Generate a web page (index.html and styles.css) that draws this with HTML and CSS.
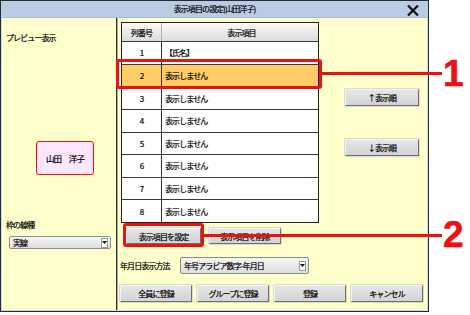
FILE: index.html
```html
<!DOCTYPE html>
<html lang="ja">
<head>
<meta charset="utf-8">
<link rel="stylesheet" href="styles.css">
</head>
<body>
<div class="window">
  <div class="titlebar">
    <span class="title">表示項目の設定(山田洋子)</span>
    <svg class="close" width="12" height="11" viewBox="0 0 12 11"><path d="M1 0.5 L11 10.5 M11 0.5 L1 10.5" stroke="#111" stroke-width="2.2"/></svg>
  </div>
  <div class="content">
    <div class="left">
      <div class="label preview-label">プレビュー表示</div>
      <div class="card">山田　洋子</div>
      <div class="label line-label">枠の線種</div>
      <div class="select small-select"><span>実線</span><span class="arrow"><svg width="5" height="3" viewBox="0 0 5 3"><path d="M0 0H5L2.5 3Z" fill="#111"/></svg></span></div>
    </div>
    <div class="main">
      <div class="top">
        <div class="table">
          <div class="row head"><div class="c1">列番号</div><div class="c2">表示項目</div></div>
          <div class="row"><div class="c1">1</div><div class="c2">【氏名】</div></div>
          <div class="row sel"><div class="c1">2</div><div class="c2">表示しません</div></div>
          <div class="row"><div class="c1">3</div><div class="c2">表示しません</div></div>
          <div class="row"><div class="c1">4</div><div class="c2">表示しません</div></div>
          <div class="row"><div class="c1">5</div><div class="c2">表示しません</div></div>
          <div class="row"><div class="c1">6</div><div class="c2">表示しません</div></div>
          <div class="row"><div class="c1">7</div><div class="c2">表示しません</div></div>
          <div class="row"><div class="c1">8</div><div class="c2">表示しません</div></div>
        </div>
        <div class="side">
          <div class="btn side-btn">↑表示順</div>
          <div class="btn side-btn down">↓表示順</div>
        </div>
      </div>
      <div class="actions">
        <div class="btn set-btn">表示項目を設定</div>
        <div class="btn del-btn">表示項目を削除</div>
      </div>
      <div class="date-row">
        <span class="label">年月日表示方法</span>
        <div class="select date-select"><span>年号アラビア数字-年月日</span><span class="arrow"><svg width="5" height="3" viewBox="0 0 5 3"><path d="M0 0H5L2.5 3Z" fill="#111"/></svg></span></div>
      </div>
      <div class="bottom">
        <div class="btn bb">全員に登録</div>
        <div class="btn bb">グループに登録</div>
        <div class="btn bb">登録</div>
        <div class="btn bb">キャンセル</div>
      </div>
    </div>
  </div>
</div>
<div class="anno box1"></div>
<div class="anno line1"></div>
<div class="anno num num1">1</div>
<div class="anno box2"></div>
<div class="anno line2"></div>
<div class="anno num num2">2</div>
</body>
</html>
```
FILE: styles.css
```css
* { box-sizing: border-box; }
body {
  margin: 0;
  background: #fff;
  width: 470px;
  height: 315px;
  position: relative;
  font-family: "Noto Sans CJK JP", "Noto Sans", sans-serif;
  font-size: 8px;
  letter-spacing: -0.9px;
  color: #000;
  -webkit-text-stroke: 0.2px #000;
  overflow: hidden;
}
.window {
  width: 429px;
  height: 312px;
  border: 1px solid #2a2a2a;
  display: flex;
  flex-direction: column;
  background: #c9dced;
}
.titlebar {
  height: 17px;
  background: #b8cde3;
  display: flex;
  align-items: center;
  justify-content: center;
  position: relative;
  border-bottom: 1px solid #a9bfd6;
}
.title { line-height: 1; }
.close { position: absolute; right: 9px; top: 4px; }
.content {
  flex: 1;
  display: flex;
  background: #ffffcc;
  margin: 0 1px 1px 1px;
}
.left {
  width: 115px;
  flex: 0 0 115px;
  border-right: 1px solid #333;
  box-shadow: 1px 0 0 #a8a8a0;
  display: flex;
  flex-direction: column;
  padding-left: 4px;
}
.label { line-height: 10px; white-space: nowrap; }
.preview-label { margin-top: 15px; }
.card {
  margin: 98px 0 0 30px;
  width: 58px;
  height: 34px;
  background: #ffe6ff;
  border: 1.5px solid #ee1010;
  border-radius: 3px;
  display: flex;
  align-items: center;
  justify-content: center;
  font-size: 8.5px;
}
.line-label { margin-top: 45px; }
.select {
  display: flex;
  align-items: center;
  justify-content: space-between;
  border: 1px solid #8d8d8d;
  border-radius: 2px;
  background: linear-gradient(#f6f6f6, #dedede);
  padding-left: 3px;
  padding-right: 2px;
  white-space: nowrap;
}
.arrow {
  width: 7px;
  height: 10px;
  background: #fff;
  border: 1px solid #9a9a9a;
  display: flex;
  align-items: center;
  justify-content: center;
  -webkit-text-stroke: 0;
}
.small-select {
  margin: 6px 0 0 3px;
  width: 102px;
  height: 13px;
}
.main {
  flex: 1;
  display: flex;
  flex-direction: column;
  padding-left: 1px;
}
.top { display: flex; }
.table {
  margin: 4px 0 0 3px;
  flex: 0 0 198px;
  width: 198px;
  height: 201px;
  border: 1px solid #222;
  background: #fff;
  display: grid;
  grid-template-rows: 18px repeat(8, 1fr);
}
.row {
  display: grid;
  grid-template-columns: 40px 1fr;
  border-top: 1px solid #3a3a3a;
  align-items: stretch;
}
.row.head { border-top: none; background: linear-gradient(#fafafa, #dcdcdc); }
.row.sel { background: #ffcc66; }
.row > div { display: flex; align-items: center; }
.c1 { justify-content: center; border-right: 1px solid #333; }
.head .c1 { border-right: 1px solid #b0b0b0; }
.head .c2 { justify-content: center; }
.c2 { padding-left: 3px; }
.side {
  display: flex;
  flex-direction: column;
  padding: 71px 0 0 26px;
  gap: 33px;
}
.btn {
  display: flex;
  align-items: center;
  justify-content: center;
  background: linear-gradient(#e6e6e8, #d3d4d8);
  border: 1px solid;
  border-color: #f4f4f4 #6e6e6e #6e6e6e #f4f4f4;
  box-shadow: 0 0 0 0.5px #b8b8b8;
  white-space: nowrap;
  flex: none;
}
.side-btn { width: 74px; height: 17px; }
.actions { display: flex; margin-top: 5px; padding-left: 8px; gap: 8px; }
.set-btn { width: 75px; height: 16px; }
.del-btn { width: 72px; height: 16px; }
.date-row {
  display: flex;
  align-items: center;
  margin-top: 13px;
  padding-left: 2px;
}
.date-row .label { width: 60px; flex: none; }
.date-select { flex: 0 0 129px; width: 129px; height: 17px; }
.bottom {
  display: flex;
  gap: 5px;
  margin-top: 11px;
  padding-left: 2px;
}
.bb { width: 72px; height: 17px; }
.anno { position: absolute; }
.box1 {
  left: 116px; top: 59px; width: 206px; height: 30px;
  border: 3px solid #ee1111; border-radius: 3px;
}
.line1 { left: 322px; top: 72px; width: 120px; height: 3px; background: #ee1111; }
.box2 {
  left: 123px; top: 223px; width: 81px; height: 24px;
  border: 3px solid #ee1111; border-radius: 3px;
}
.line2 { left: 204px; top: 234px; width: 238px; height: 2.5px; background: #ee1111; }
.num {
  font-family: "Liberation Sans", Arial, sans-serif;
  font-weight: bold;
  font-size: 37px;
  line-height: 1;
  color: #ee1111;
  letter-spacing: 0;
  -webkit-text-stroke: 0.6px #ee1111;
}
.num1 { left: 443px; top: 55px; }
.num2 { left: 443px; top: 216px; }
```
